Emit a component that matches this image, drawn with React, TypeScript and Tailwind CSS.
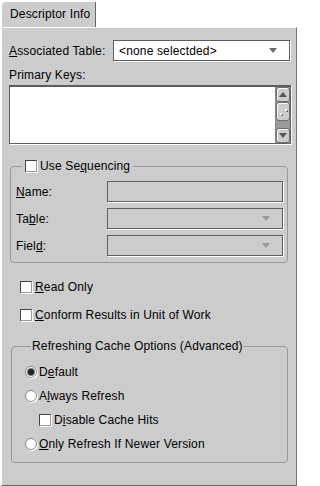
import React from "react";

// Small Swing-style widgets used by the panel
function Check({ className = "" }: { className?: string }) {
  return (
    <span
      className={`inline-block w-[12px] h-[12px] shrink-0 bg-white border border-t-[#444] border-l-[#444] border-b-[#999] border-r-[#999] shadow-[1px_1px_0_#fff] ${className}`}
    />
  );
}

function Radio({ checked = false }: { checked?: boolean }) {
  return (
    <span className="flex items-center justify-center w-[12px] h-[12px] shrink-0 rounded-full bg-white border border-[#888] shadow-[1px_1px_0_#fff]">
      {checked && <span className="w-[6px] h-[6px] rounded-full bg-[#222] shadow-[0_0_0_1px_#777]" />}
    </span>
  );
}

function Arrow({ color = "#666", up = false }: { color?: string; up?: boolean }) {
  return (
    <svg width="8" height="5" viewBox="0 0 8 5" className="shrink-0">
      <path d={up ? "M0 5 L4 0 L8 5 Z" : "M0 0 L8 0 L4 5 Z"} fill={color} />
    </svg>
  );
}

function Field({
  children,
  disabled = false,
  combo = false,
  className = "",
}: {
  children?: React.ReactNode;
  disabled?: boolean;
  combo?: boolean;
  className?: string;
}) {
  return (
    <div
      className={`flex items-center h-[21px] border border-[#5e5e5e] shadow-[1px_1px_0_#fff] px-[5px] ${
        disabled ? "bg-[#cccccc]" : "bg-white"
      } ${className}`}
    >
      <span className="flex-1 truncate">{children}</span>
      {combo && (
        <span className="pr-[7px]">
          <Arrow color={disabled ? "#999" : "#6a6a6a"} />
        </span>
      )}
    </div>
  );
}

function ScrollBar() {
  const btn =
    "flex items-center justify-center h-[15px] rounded-[3px] border border-[#6e6e6e] bg-[#cccccc] shadow-[inset_1px_1px_0_#fff]";
  return (
    <div className="flex flex-col w-[15px] bg-[#999999] border-l border-[#888]">
      <div className={btn}>
        <Arrow up color="#555" />
      </div>
      <div className="relative h-[19px] rounded-[3px] border border-[#6e6e6e] bg-[#cccccc] shadow-[inset_1px_1px_0_#fff]">
        <span className="absolute left-[8px] top-[6px] w-[2px] h-[2px] bg-white shadow-[1px_1px_0_#777]" />
        <span className="absolute left-[3px] top-[10px] w-[2px] h-[2px] bg-white shadow-[1px_1px_0_#777]" />
      </div>
      <div className="flex-1" />
      <div className={btn}>
        <Arrow color="#555" />
      </div>
    </div>
  );
}

function U({ children }: { children: React.ReactNode }) {
  return <span className="underline underline-offset-[1px] decoration-[1px]">{children}</span>;
}

export default function App() {
  return (
    <div className="flex flex-col w-[297px] h-[486px] bg-white text-[12px] leading-[14px] tracking-[0.15px] text-black font-['Liberation_Sans',Arial,sans-serif]">
      {/* Tab strip */}
      <div className="flex h-[27px] pt-[1px] pl-[1px]">
        <div className="flex items-center w-[95px] bg-[#cccccc] rounded-tl-[5px] rounded-tr-[2px] border-t border-l border-white border-r border-r-[#666] pl-[8px] pb-[1px]">
          Descriptor Info
        </div>
      </div>

      {/* Panel */}
      <div className="flex flex-col flex-1 bg-[#cccccc] border-t border-l border-white border-r border-b border-r-[#777] border-b-[#666] ml-[1px] pl-[7px] pr-[6px] pt-[12px]">
        <div className="flex items-center h-[21px]">
          <span className="w-[104px]">
            <U>A</U>ssociated Table:
          </span>
          <Field combo className="flex-1">
            &lt;none selectded&gt;
          </Field>
        </div>

        <div className="mt-[7px]">Primary Keys:</div>

        <div className="flex mt-[3px] h-[59px] mr-[-1px] border border-[#5e5e5e] border-t-2 shadow-[1px_1px_0_#fff] bg-white">
          <div className="flex-1" />
          <ScrollBar />
        </div>

        {/* Sequencing group */}
        <fieldset className="mt-[15px] ml-[1px] mr-[2px] border border-[#999] rounded-[4px] pl-[5px] pr-[4px] pb-[6px]">
          <legend className="ml-[6px] px-[3px]">
            <span className="flex items-center gap-[3px]">
              <Check />
              <span>
                Use Se<U>q</U>uencing
              </span>
            </span>
          </legend>
          <div className="flex flex-col gap-[6px] pt-[8px]">
            <div className="flex items-center">
              <span className="w-[91px]">
                <U>N</U>ame:
              </span>
              <Field disabled className="flex-1" />
            </div>
            <div className="flex items-center">
              <span className="w-[91px]">
                Ta<U>b</U>le:
              </span>
              <Field disabled combo className="flex-1" />
            </div>
            <div className="flex items-center">
              <span className="w-[91px]">
                Fiel<U>d</U>:
              </span>
              <Field disabled combo className="flex-1" />
            </div>
          </div>
        </fieldset>

        <div className="flex items-center gap-[3px] mt-[17px] ml-[11px]">
          <Check />
          <span>
            <U>R</U>ead Only
          </span>
        </div>
        <div className="flex items-center gap-[3px] mt-[14px] ml-[11px]">
          <Check />
          <span>
            <U>C</U>onform Results in Unit of Work
          </span>
        </div>

        {/* Refresh options group */}
        <fieldset className="mt-[17px] ml-[2px] mr-[2px] border border-[#999] rounded-[4px] pl-[13px] pb-[11px]">
          <legend className="ml-[6px] px-[1px]">Refreshing Cache Options (Advanced)</legend>
          <div className="flex flex-col gap-[10px] pt-[12px]">
            <div className="flex items-center gap-[2px]">
              <Radio checked />
              <span>
                D<U>e</U>fault
              </span>
            </div>
            <div className="flex items-center gap-[2px]">
              <Radio />
              <span>
                A<U>l</U>ways Refresh
              </span>
            </div>
            <div className="flex items-center gap-[3px] ml-[14px]">
              <Check />
              <span>
                D<U>i</U>sable Cache Hits
              </span>
            </div>
            <div className="flex items-center gap-[2px]">
              <Radio />
              <span>
                <U>O</U>nly Refresh If Newer Version
              </span>
            </div>
          </div>
        </fieldset>
      </div>
    </div>
  );
}
